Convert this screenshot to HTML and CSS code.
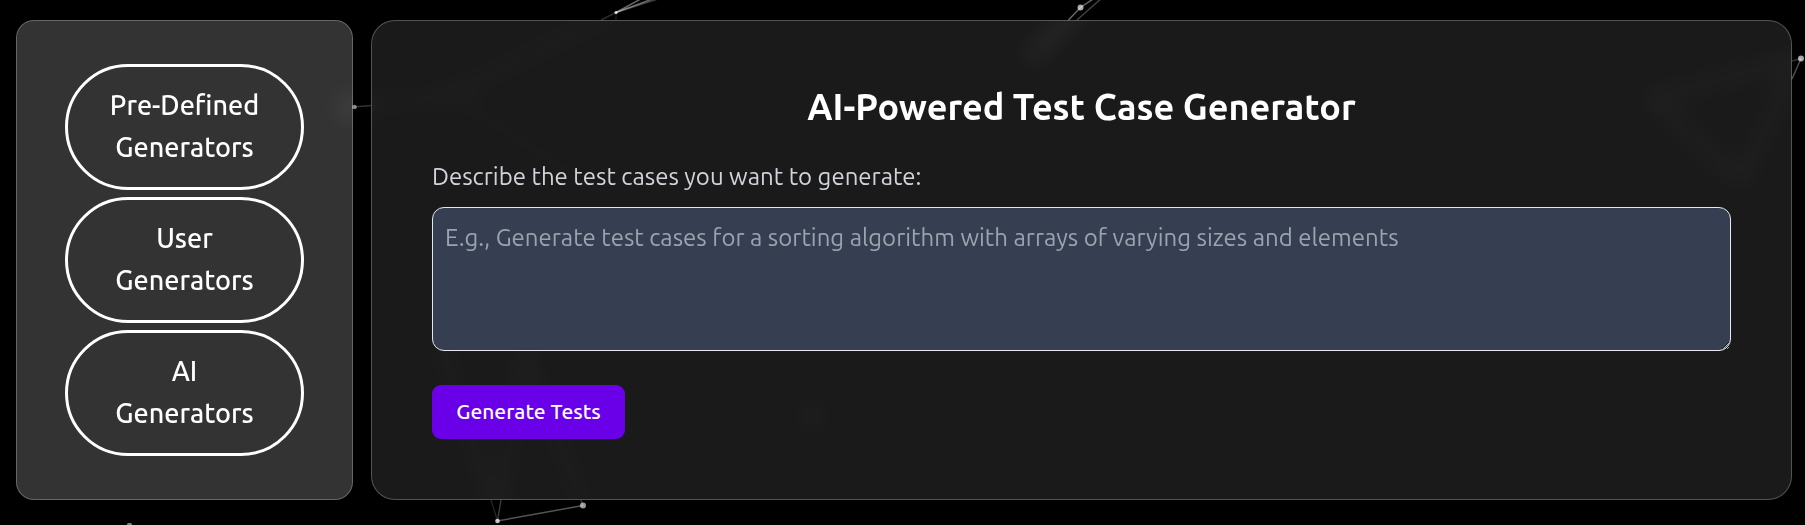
FILE: index.html
```html
<!DOCTYPE html>
<html lang="en">
<head>
<meta charset="utf-8">
<title>AI-Powered Test Case Generator</title>
<link rel="stylesheet" href="styles.css">
</head>
<body>
<svg class="particles" width="1805" height="525" viewBox="0 0 1805 525" aria-hidden="true">
  <defs>
    <clipPath id="under-panels"><rect x="16" y="20" width="337" height="480" rx="18"/><rect x="371" y="20" width="1421" height="480" rx="24"/></clipPath>
    <filter id="soft" filterUnits="userSpaceOnUse" x="0" y="0" width="1805" height="525"><feGaussianBlur stdDeviation="12"/></filter>
  </defs>
  <g stroke="#fff" stroke-width="1.500" fill="none">
    <path d="M616 12.500L648-5" opacity=".4"/>
    <path d="M616 12.500L663-5" opacity=".4"/>
    <path d="M616 12.500L670-5" opacity=".25"/>
    <path d="M616 12.500L601 20" opacity=".17"/>
    <path d="M616 12.500V20" opacity=".1"/>
    <path d="M354 107L371 105.500" opacity=".2"/>
    <path d="M1068.500 20L1080.500 7.500L1096-3" opacity=".4"/>
    <path d="M1077 20L1103-3" opacity=".25"/>
    <path d="M1801 58.500L1792 61" opacity=".2"/>
    <path d="M1801 58.500L1792 79" opacity=".3"/>
    <path d="M497.500 521L583 505.500" opacity=".33"/>
    <path d="M497.500 521L501 500M583 505.500L581 500" opacity=".22"/>
    <path d="M497.500 521L491 500" opacity=".13"/>
  </g>
  <g fill="#fff">
    <circle cx="616" cy="12.500" r="1.600" opacity=".8"/>
    <circle cx="354.500" cy="107" r="2.300" opacity=".5"/>
    <circle cx="1080.500" cy="7.500" r="3" opacity=".65"/>
    <circle cx="1801" cy="58.500" r="3" opacity=".65"/>
    <circle cx="497.500" cy="521" r="2.300" opacity=".75"/>
    <circle cx="583" cy="505.500" r="3" opacity=".6"/>
    <circle cx="129.500" cy="525.500" r="2.700" opacity=".5"/>
  </g>
  <g clip-path="url(#under-panels)">
    <g filter="url(#soft)" stroke="#fff" stroke-width="6" stroke-linecap="round" fill="none">
      <path d="M616 12L449 95L354 107" opacity=".05"/>
      <path d="M449 95L622 205" opacity=".03"/>
      <path d="M1080 7L1030 58" opacity=".16"/>
      <path d="M1801 58L1650 98L1740 180Z" opacity=".07"/>
      <path d="M497 521L525 350L583 505M497 521L440 340" opacity=".05"/>
      <path d="M345 107H354" stroke-width="10" opacity=".2"/>
      <path d="M811 416H812" stroke-width="10" opacity=".15"/>
    </g>
  </g>
</svg>
<div class="layout">
  <nav class="sidebar">
    <button class="pill"><span>Pre-Defined</span><span>Generators</span></button>
    <button class="pill"><span>User</span><span>Generators</span></button>
    <button class="pill"><span>AI</span><span>Generators</span></button>
  </nav>
  <main class="panel">
    <h1 class="title">AI-Powered Test Case Generator</h1>
    <label class="label" for="prompt">Describe the test cases you want to generate:</label>
    <textarea class="prompt" id="prompt" placeholder="E.g., Generate test cases for a sorting algorithm with arrays of varying sizes and elements"></textarea>
    <button class="generate">Generate Tests</button>
  </main>
</div>
</body>
</html>
```
FILE: styles.css
```css
* { box-sizing: border-box; }
body {
  margin: 0;
  height: 525px;
  overflow: hidden;
  background: #000;
  color: #fff;
  font-family: Ubuntu, "Noto Sans", "Open Sans", sans-serif;
}
button { font-family: inherit; color: inherit; }
.particles { position: absolute; inset: 0; }
.layout {
  position: relative;
  display: flex;
  gap: 18px;
  height: 500px;
  padding: 20px 13px 0 16px;
}
.sidebar {
  width: 337px;
  display: flex;
  flex-direction: column;
  gap: 7px;
  padding: 43px 48px;
  border: 1px solid rgba(255, 255, 255, 0.25);
  border-radius: 18px;
  background: rgba(255, 255, 255, 0.2);
}
.pill {
  display: flex;
  flex-direction: column;
  align-items: center;
  height: 126px;
  padding: 17px 0;
  border: 3px solid #fff;
  border-radius: 63px;
  background: transparent;
  font-size: 27px;
  font-weight: 500;
  line-height: 42px;
}
.panel {
  flex: 1;
  display: flex;
  flex-direction: column;
  align-items: flex-start;
  padding: 60px;
  border: 1px solid rgba(255, 255, 255, 0.25);
  border-radius: 24px;
  background: rgba(255, 255, 255, 0.103);
}
.title {
  width: 100%;
  margin: 0;
  font-size: 36px;
  font-weight: 600;
  line-height: 52px;
  text-align: center;
}
.label {
  margin: 26px 0 12px;
  color: #d1d5db;
  font-size: 24px;
  font-weight: 400;
  line-height: 36px;
}
.prompt {
  display: block;
  width: 1299px;
  height: 144px;
  padding: 12px;
  border: 1px solid #e5e7eb;
  border-radius: 12px;
  background: #363f51;
  color: #fff;
  font-family: inherit;
  font-size: 24px;
  font-weight: 400;
  line-height: 36px;
}
.prompt::placeholder { color: #9ca3af; }
.generate {
  width: 193px;
  height: 54px;
  margin-top: 34px;
  padding: 0 0 2px;
  border: 0;
  border-radius: 9px;
  background: #6a00e8;
  font-size: 21px;
  font-weight: 500;
}
```
